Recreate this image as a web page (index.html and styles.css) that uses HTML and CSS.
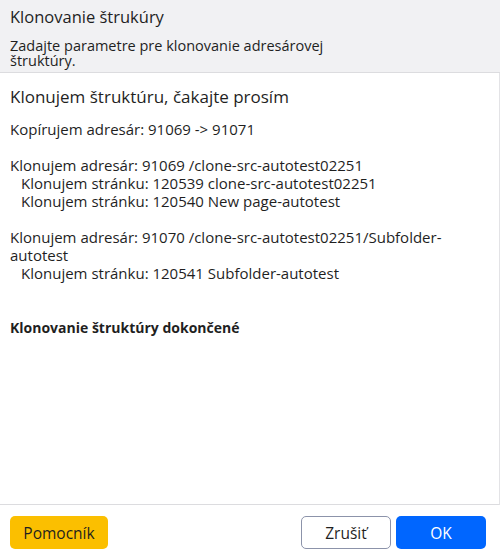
FILE: index.html
```html
<!DOCTYPE html>
<html lang="sk">
<head>
<meta charset="utf-8">
<link rel="stylesheet" href="styles.css">
</head>
<body>
<div class="dialog">
  <div class="header">
    <div class="title">Klonovanie štrukúry</div>
    <div class="subtitle">Zadajte parametre pre klonovanie adresárovej<br>štruktúry.</div>
  </div>
  <div class="content">
    <div class="heading">Klonujem štruktúru, čakajte prosím</div>
    <div class="log">
      <div class="line">Kopírujem adresár: 91069 -&gt; 91071</div>
      <div class="line blank"></div>
      <div class="line">Klonujem adresár: 91069 /clone-src-autotest02251</div>
      <div class="line sub">Klonujem stránku: 120539 clone-src-autotest02251</div>
      <div class="line sub">Klonujem stránku: 120540 New page-autotest</div>
      <div class="line blank"></div>
      <div class="line">Klonujem adresár: 91070 /clone-src-autotest02251/Subfolder-autotest</div>
      <div class="line sub">Klonujem stránku: 120541 Subfolder-autotest</div>
      <div class="line blank"></div>
      <div class="line blank"></div>
      <div class="line done">Klonovanie štruktúry dokončené</div>
    </div>
  </div>
  <div class="footer">
    <button class="btn btn-help">Pomocník</button>
    <div class="spacer"></div>
    <button class="btn btn-cancel">Zrušiť</button>
    <button class="btn btn-ok">OK</button>
  </div>
</div>
</body>
</html>
```

FILE: styles.css
```css
html, body {
  margin: 0;
  padding: 0;
  background: #ffffff;
}
body {
  font-family: "Open Sans", Lato, sans-serif;
  color: #1f1f1f;
}
.dialog {
  width: 500px;
  height: 560px;
  display: flex;
  flex-direction: column;
  box-sizing: border-box;
}
.header {
  background: #f1f1f3;
  border-bottom: 1px solid #dcdcdf;
  padding: 5px 10px 5px 10px;
  height: 73px;
  box-sizing: border-box;
}
.title {
  font-size: 16.5px;
  line-height: 24px;
}
.subtitle {
  font-size: 14.5px;
  line-height: 15px;
  margin-top: 9px;
}
.content {
  flex: 1;
  padding: 12px 10px 0 10px;
  border-right: 1px solid #e3e3e6;
  border-bottom: 1px solid #dcdcdf;
  box-sizing: border-box;
}
.heading {
  font-size: 17px;
  line-height: 24px;
  margin-bottom: 11px;
}
.log {
  font-size: 15px;
  line-height: 18px;
}
.line.blank {
  height: 18px;
}
.line.sub {
  padding-left: 11px;
}
.line.done {
  font-weight: bold;
  font-size: 14px;
  margin-top: 1px;
}
.footer {
  height: 55px;
  display: flex;
  align-items: center;
  padding: 0 14px 0 10px;
  gap: 5px;
  box-sizing: border-box;
}
.spacer {
  flex: 1;
}
.btn {
  font-family: "Open Sans", Lato, sans-serif;
  font-size: 15.5px;
  height: 33px;
  border-radius: 5px;
  border: 1px solid transparent;
  padding: 0;
  cursor: pointer;
}
.btn-help {
  width: 98px;
  background: #fbbf00;
  color: #1f1f1f;
}
.btn-cancel {
  width: 90px;
  background: #ffffff;
  border-color: #8c93aa;
  color: #1f1f1f;
}
.btn-ok {
  width: 90px;
  background: #0066ff;
  color: #ffffff;
}
```
